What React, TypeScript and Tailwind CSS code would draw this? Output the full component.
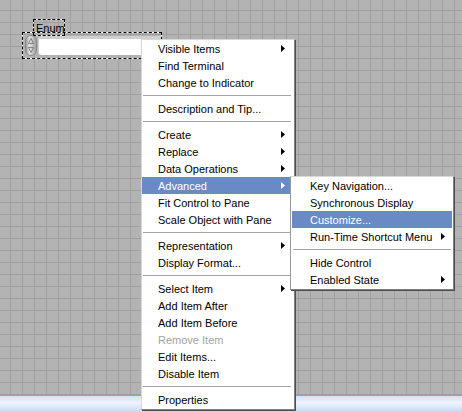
import React from "react";

type Item = { t: string; arrow?: boolean; active?: boolean; disabled?: boolean } | "sep";

const mainItems: Item[] = [
  { t: "Visible Items", arrow: true },
  { t: "Find Terminal" },
  { t: "Change to Indicator" },
  "sep",
  { t: "Description and Tip..." },
  "sep",
  { t: "Create", arrow: true },
  { t: "Replace", arrow: true },
  { t: "Data Operations", arrow: true },
  { t: "Advanced", arrow: true, active: true },
  { t: "Fit Control to Pane" },
  { t: "Scale Object with Pane" },
  "sep",
  { t: "Representation", arrow: true },
  { t: "Display Format..." },
  "sep",
  { t: "Select Item", arrow: true },
  { t: "Add Item After" },
  { t: "Add Item Before" },
  { t: "Remove Item", disabled: true },
  { t: "Edit Items..." },
  { t: "Disable Item" },
  "sep",
  { t: "Properties" },
];

const subItems: Item[] = [
  { t: "Key Navigation..." },
  { t: "Synchronous Display" },
  { t: "Customize...", active: true },
  { t: "Run-Time Shortcut Menu", arrow: true },
  "sep",
  { t: "Hide Control" },
  { t: "Enabled State", arrow: true },
];

function Arrow({ white }: { white?: boolean }) {
  return (
    <svg width="4" height="7" viewBox="0 0 4 7" className="block">
      <polygon points="0,0 4,3.5 0,7" fill={white ? "#ffffff" : "#000000"} />
    </svg>
  );
}

function Menu({ items, sub }: { items: Item[]; sub?: boolean }) {
  return (
    <div className="flex flex-col">
      {items.map((it, i) =>
        it === "sep" ? (
          <div key={i} className={`h-[9px] flex items-center ${sub ? "mx-[2px]" : "ml-[1px] mr-[3px]"}`}>
            <div className="h-px w-full bg-[#a5a5a5]" />
          </div>
        ) : (
          <div
            key={i}
            className={`h-[17px] flex items-center justify-between ${
              sub ? "pl-[18px] pr-[7px] mx-px" : "pl-[16px] pr-[9px]"
            } ${it.active ? "bg-[#6a8ac6] text-white" : it.disabled ? "text-[#a3a3a3]" : "text-black"}`}
          >
            <span className="whitespace-nowrap leading-none pt-[2px]">{it.t}</span>
            {it.arrow && <Arrow white={it.active} />}
          </div>
        )
      )}
    </div>
  );
}

export default function App() {
  return (
    <div className="relative w-[462px] h-[412px] overflow-hidden flex flex-col font-['Liberation_Sans',Arial,sans-serif] text-[11px] select-none">
      <div className="flex-1 bg-[#b3b3b3] bg-[image:linear-gradient(to_right,#a0a0a0_1px,transparent_1px),linear-gradient(to_bottom,#a0a0a0_1px,transparent_1px)] bg-[length:12px_12px] bg-[position:10px_10px]" />
      <div className="h-[17px] border-t border-[#87a4d6] bg-[linear-gradient(to_bottom,#d3e2f7,#eef4fc_45%,#c6d8f3)]" />

      {/* Enum label */}
      <div className="absolute left-[33px] top-[19px] w-[32px] h-[17px] border border-white">
        <div className="absolute inset-[-1px] border border-dashed border-black" />
        <span className="absolute left-[2px] top-[3px] leading-none text-black">Enum</span>
      </div>

      {/* Enum control */}
      <div className="absolute left-[22px] top-[32px] w-[140px] h-[27px] border border-white">
        <div className="absolute inset-[-1px] border border-dashed border-black" />
        <div className="absolute left-[1px] top-[1px] right-0 bottom-[1px] flex items-stretch">
          <div className="w-[13px] flex items-center justify-center">
            <svg width="12" height="21" viewBox="0 0 12 21">
              <defs>
                <linearGradient id="sp" x1="0" x2="1" y1="0" y2="0">
                  <stop offset="0" stopColor="#8c8c8c" />
                  <stop offset="0.35" stopColor="#e6e6e6" />
                  <stop offset="1" stopColor="#9a9a9a" />
                </linearGradient>
              </defs>
              <rect x="0.5" y="0.5" width="11" height="20" rx="5.5" fill="url(#sp)" stroke="#8a8a8a" />
              <polygon points="6,3.5 8.5,8.5 3.5,8.5" fill="none" stroke="#6e6e6e" strokeWidth="0.8" />
              <polygon points="3.5,12.5 8.5,12.5 6,17.5" fill="none" stroke="#6e6e6e" strokeWidth="0.8" />
            </svg>
          </div>
          <div className="flex-1 my-[2px] ml-px bg-white border-t-[3px] border-l border-[#cfcfcf] rounded-l-[3px]" />
        </div>
      </div>

      {/* Main context menu */}
      <div className="absolute left-[141px] top-[39px] w-[154px] bg-white border border-t-[#d8d8d8] border-l-[#d8d8d8] border-r-[#808080] border-b-[#808080] shadow-[1px_1px_0_#4d4d4d] pb-px">
        <Menu items={mainItems} />
      </div>

      {/* Submenu */}
      <div className="absolute left-[290px] top-[176px] w-[164px] bg-white border border-t-[#d8d8d8] border-l-[#9a9a9a] border-r-[#808080] border-b-[#808080] shadow-[1px_1px_0_#4d4d4d] pb-px">
        <Menu items={subItems} sub />
      </div>
    </div>
  );
}
